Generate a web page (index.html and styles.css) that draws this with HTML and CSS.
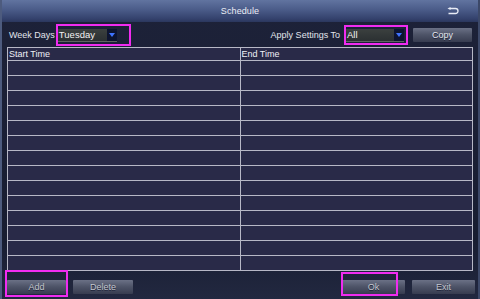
FILE: index.html
```html
<!DOCTYPE html>
<html lang="en">
<head>
    <meta charset="UTF-8">
    <title>Schedule</title>
    <link rel="stylesheet" href="styles.css">
</head>
<body>
    <div class="window">
        <!-- title bar -->
        <div class="title-bar">
            <span></span>
            <span class="title">Schedule</span>
            <span class="back">
                <svg width="12" height="9" viewBox="0 0 12 9">
                    <path d="M3 1.5 H8.5 A2.5 2.5 0 0 1 8.5 6.5 H1.5" fill="none" stroke="#e8ecf6" stroke-width="1.3"/>
                    <path d="M0.5 1.5 L3.5 0 L3.5 3 Z" fill="#e8ecf6"/>
                </svg>
            </span>
        </div>

        <div class="toolbar">
            <span class="label">Week Days</span>
            <div class="mark mark-day">
                <div class="select select-day">
                    <span class="value">Tuesday</span>
                    <span class="arrow"></span>
                </div>
            </div>
            <span class="spacer"></span>
            <span class="label">Apply Settings To</span>
            <div class="mark mark-all">
                <div class="select select-all">
                    <span class="value">All</span>
                    <span class="arrow"></span>
                </div>
            </div>
            <button class="btn btn-copy">Copy</button>
        </div>

        <table class="schedule">
            <thead>
                <tr><th>Start Time</th><th>End Time</th></tr>
            </thead>
            <tbody>
                <tr><td></td><td></td></tr>
                <tr><td></td><td></td></tr>
                <tr><td></td><td></td></tr>
                <tr><td></td><td></td></tr>
                <tr><td></td><td></td></tr>
                <tr><td></td><td></td></tr>
                <tr><td></td><td></td></tr>
                <tr><td></td><td></td></tr>
                <tr><td></td><td></td></tr>
                <tr><td></td><td></td></tr>
                <tr><td></td><td></td></tr>
                <tr><td></td><td></td></tr>
                <tr><td></td><td></td></tr>
                <tr><td></td><td></td></tr>
            </tbody>
        </table>

        <div class="footer">
            <button class="btn btn-add hl-add">Add</button>
            <button class="btn btn-delete">Delete</button>
            <span class="spacer"></span>
            <button class="btn btn-ok hl-ok">Ok</button>
            <button class="btn btn-exit">Exit</button>
        </div>
    </div>
</body>
</html>
```

FILE: styles.css
```css
      body {
          margin: 0;
          font-family: "Liberation Sans", Arial, sans-serif;
          font-size: 9px;
          color: #e4e6ee;
          background-color: #151a2e;
      }

      .window {
          width: 480px;
          height: 299px;
          box-sizing: border-box;
          display: flex;
          flex-direction: column;
          overflow: hidden;
          background: linear-gradient(#1d2239, #181d31 80%, #222840);
          border-left: 2px solid #4d5b7e;
          border-right: 2px solid #3c4868;
      }

      .title-bar {
          height: 22px;
          flex: none;
          display: grid;
          grid-template-columns: 1fr auto 1fr;
          align-items: center;
          margin: 0 -2px;
          background: linear-gradient(#6174a0, #4a5b88 45%, #34426d 85%, #2b375e);
      }

      .title {
          font-size: 9px;
          color: #eceef6;
          letter-spacing: 0.1px;
      }

      .back {
          justify-self: end;
          display: flex;
          margin-right: 21px;
          margin-top: 1px;
      }

      .toolbar {
          height: 25px;
          flex: none;
          display: flex;
          align-items: center;
          padding: 0 6px 0 7px;
      }

      .label {
          color: #e2e4ec;
          font-size: 9px;
      }

      .spacer {
          flex: 1;
      }

      /* magenta highlight boxes */
      .mark {
          border: 2px solid #f02cf0;
          display: flex;
      }

      .mark-day {
          margin-left: 1px;
          padding: 3px 12px 2px 0;
      }

      .mark-all {
          margin-left: 4px;
          padding: 2px 2px 1px 0;
      }

      .select {
          height: 13px;
          box-sizing: border-box;
          display: flex;
          align-items: stretch;
          background: linear-gradient(#3b403f, #2b3032);
          border-bottom: 1px solid #5d6463;
      }

      .select .value {
          flex: 1;
          padding-left: 1px;
          line-height: 12px;
          color: #f2f2f2;
          font-size: 9.5px;
      }

      .select-day {
          width: 59px;
      }

      .select-all {
          width: 58px;
      }

      .arrow {
          width: 10px;
          position: relative;
          background-color: #0d1430;
      }

      .arrow::after {
          content: "";
          position: absolute;
          left: 2px;
          top: 4px;
          border-left: 3px solid transparent;
          border-right: 3px solid transparent;
          border-top: 4px solid #3f73ff;
      }

      .btn {
          font-family: "Liberation Sans", Arial, sans-serif;
          font-size: 9px;
          height: 14px;
          padding: 0;
          border: none;
          border-radius: 1px;
          color: #c4c6ce;
          background: linear-gradient(#6b7186, #4f5569 45%, #373c50);
          text-shadow: 0 1px 0 #20253a;
          cursor: pointer;
      }

      .btn-copy {
          width: 59px;
          margin-left: 5px;
          color: #e6e8f0;
      }

      .schedule {
          width: 466px;
          margin-left: 5px;
          border-collapse: collapse;
          table-layout: fixed;
          flex: none;
      }

      .schedule th,
      .schedule td {
          border: 1px solid #b7b8c6;
          background-color: #292a48;
          padding: 0 0 0 1px;
          text-align: left;
      }

      .schedule th {
          height: 12px;
          font-weight: normal;
          font-size: 9px;
          line-height: 11px;
          color: #eef0f6;
      }

      .schedule td {
          height: 14px;
      }

      .footer {
          flex: 1;
          display: flex;
          align-items: flex-end;
          padding: 0 3px 5px 5px;
      }

      .btn-add {
          width: 59px;
      }

      .btn-delete {
          width: 60px;
          margin-left: 7px;
      }

      .btn-ok {
          width: 63px;
      }

      .btn-exit {
          width: 63px;
          margin-left: 7px;
      }

      .hl-add,
      .hl-ok {
          position: relative;
      }

      .hl-add::after,
      .hl-ok::after {
          content: "";
          position: absolute;
          border: 2px solid #f02cf0;
      }

      .hl-add::after {
          left: -2px;
          right: -2px;
          top: -10px;
          bottom: -3px;
      }

      .hl-ok::after {
          left: -1px;
          right: 7px;
          top: -8px;
          bottom: -2px;
      }
```
